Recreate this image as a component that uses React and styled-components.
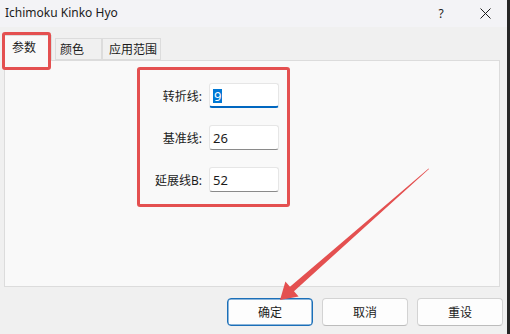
import React from 'react';
import styled, { createGlobalStyle } from 'styled-components';

const Global = createGlobalStyle`
  html, body { margin: 0; padding: 0; background: #f0f0f0; }
  body {
    font-family: "Noto Sans", "Noto Sans CJK SC", sans-serif;
    font-size: 12px;
    color: #1b1b1b;
  }
`;

const RED = '#e45050';

const Window = styled.div`
  position: relative;
  width: 510px;
  height: 334px;
  box-sizing: border-box;
  border-right: 3px solid #262626;
  background: #f0f0f0;
  display: flex;
  flex-direction: column;
  overflow: hidden;
`;

const TitleBar = styled.div`
  height: 27px;
  flex: none;
  background: #f3f3f6;
  display: flex;
  align-items: center;
  padding-left: 5px;
`;

const Title = styled.span`
  flex: 1;
  font-size: 12px;
  line-height: 1;
  padding-bottom: 2px;
`;

const TitleBtn = styled.span`
  width: 44px;
  height: 27px;
  display: flex;
  align-items: center;
  justify-content: center;
  font-size: 12px;
  color: #1b1b1b;
`;

const Body = styled.div`
  flex: 1;
  display: flex;
  flex-direction: column;
  padding: 0 4px;
`;

const TabStrip = styled.div`
  height: 33px;
  flex: none;
  display: flex;
  align-items: flex-end;
  position: relative;
  z-index: 1;
`;

const Tab = styled.div`
  box-sizing: border-box;
  width: ${p => p.$w}px;
  margin-left: ${p => p.$ml || 0}px;
  height: ${p => (p.$active ? 26 : 22)}px;
  margin-bottom: ${p => (p.$active ? -1 : 0)}px;
  background: ${p => (p.$active ? '#f9f9f9' : '#f0f0f0')};
  border: 1px solid #dcdcdc;
  border-bottom: ${p => (p.$active ? 'none' : '1px solid #dcdcdc')};
  display: flex;
  align-items: center;
  justify-content: flex-start;
  padding-left: ${p => p.$pl}px;
  padding-bottom: ${p => (p.$active ? 3 : 0)}px;
  font-size: 12px;
`;

const Panel = styled.div`
  height: 227px;
  box-sizing: border-box;
  margin-right: 3px;
  background: #f9f9f9;
  border: 1px solid #dcdcdc;
  padding: 6px 0 0 132px;
`;

const FieldBox = styled.div`
  box-sizing: border-box;
  width: 153px;
  height: 140px;
  border: 3px solid ${RED};
  border-radius: 3px;
  display: grid;
  grid-template-columns: 62px 70px;
  grid-auto-rows: 25px;
  column-gap: 7px;
  row-gap: 17px;
  align-content: start;
  padding-top: 13px;
`;

const Label = styled.label`
  display: flex;
  align-items: center;
  justify-content: flex-end;
  font-size: 12px;
  white-space: nowrap;
`;

const Input = styled.div`
  box-sizing: border-box;
  height: 25px;
  background: #ffffff;
  border: 1px solid #e6e6e6;
  border-bottom: ${p => (p.$focused ? '2px solid #0067c0' : '1px solid #8a8a8a')};
  border-radius: 3px;
  display: flex;
  align-items: center;
  padding: ${p => (p.$focused ? '1px 0 0 3px' : '0 0 0 3px')};
  font-size: 13px;
`;

const Selected = styled.span`
  background: #0078d4;
  color: #ffffff;
  line-height: 14px;
  padding: 0 1px;
`;

const ButtonRow = styled.div`
  display: flex;
  justify-content: flex-end;
  gap: 9px;
  margin-top: 11px;
`;

const Button = styled.button`
  box-sizing: border-box;
  width: 86px;
  height: 28px;
  border-radius: 4px;
  background: #fdfdfd;
  border: 1px solid ${p => (p.$primary ? '#1b6fb8' : '#d3d3d3')};
  border-bottom-color: ${p => (p.$primary ? '#1b6fb8' : '#bcbcbc')};
  box-shadow: ${p => (p.$primary ? 'inset 0 0 0 0.5px #1b6fb8' : 'none')};
  font-family: "Noto Sans", "Noto Sans CJK SC", sans-serif;
  font-size: 12px;
  color: #1b1b1b;
  padding: 0;
`;

const TabHighlight = styled.div`
  position: absolute;
  left: 2px;
  top: 32px;
  width: 49px;
  height: 38px;
  box-sizing: border-box;
  border: 3px solid ${RED};
  border-radius: 3px;
  pointer-events: none;
  z-index: 5;
`;

const Overlay = styled.svg`
  position: absolute;
  left: 0;
  top: 0;
  pointer-events: none;
  z-index: 6;
`;

export default function App() {
  return (
    <>
      <Global />
      <Window>
        <TitleBar>
          <Title>Ichimoku Kinko Hyo</Title>
          <TitleBtn>?</TitleBtn>
          <TitleBtn>
            <svg width="11" height="11" viewBox="0 0 11 11">
              <path d="M0.5 0.5 L10.5 10.5 M10.5 0.5 L0.5 10.5" stroke="#1b1b1b" strokeWidth="1" fill="none" />
            </svg>
          </TitleBtn>
        </TitleBar>
        <Body>
          <TabStrip>
            <Tab $active $w={48} $pl={7}>参数</Tab>
            <Tab $w={47} $ml={3} $pl={4}>颜色</Tab>
            <Tab $w={59} $pl={6}>应用范围</Tab>
          </TabStrip>
          <Panel>
            <FieldBox>
              <Label>转折线:</Label>
              <Input $focused><Selected>9</Selected></Input>
              <Label>基准线:</Label>
              <Input>26</Input>
              <Label>延展线B:</Label>
              <Input>52</Input>
            </FieldBox>
          </Panel>
          <ButtonRow>
            <Button $primary>确定</Button>
            <Button>取消</Button>
            <Button>重设</Button>
          </ButtonRow>
        </Body>
        <TabHighlight />
        <Overlay width="510" height="334" viewBox="0 0 510 334">
          <polygon
            points="429,169 294,291.3 298.6,296.5 280,300 285.4,281.5 290,286.7 428.6,168.6"
            fill={RED}
          />
        </Overlay>
      </Window>
    </>
  );
}
